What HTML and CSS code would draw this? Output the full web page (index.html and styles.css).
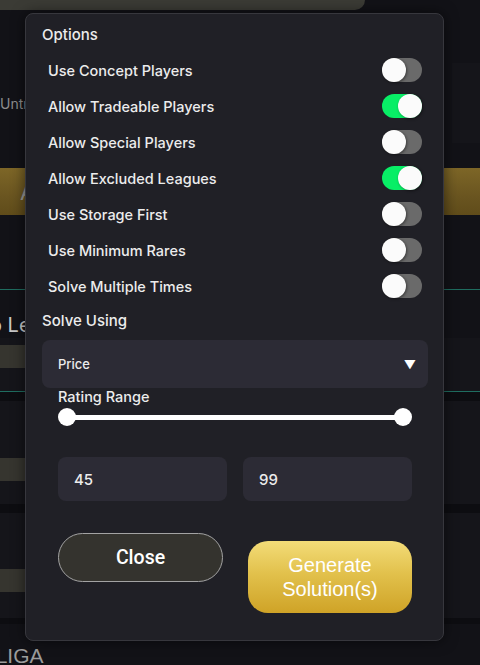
FILE: index.html
```html
<!DOCTYPE html>
<html lang="en">
<head>
<meta charset="utf-8">
<title>Options</title>
<link rel="stylesheet" href="styles.css">
</head>
<body>
<div class="page">
  <div class="topbar"></div>
  <div class="promo-row">
    <span class="muted-text">Untradeable only</span>
    <div class="side-card"></div>
  </div>
  <div class="gold-bar"><span>Add Players</span></div>
  <div class="teal-line"></div>
  <div class="section-title">Pro League</div>
  <div class="card card-first"><div class="stat-bar"></div></div>
  <div class="gap-band"></div>
  <div class="card card-mid"><div class="stat-bar"></div></div>
  <div class="gap-band"></div>
  <div class="card card-last"><div class="stat-bar"></div></div>
  <div class="gap-band gap-thin"></div>
  <div class="league-title">LALIGA</div>

  <div class="modal">
    <div class="heading">Options</div>
    <div class="options">
      <div class="opt-row"><span>Use Concept Players</span><span class="toggle"><span class="knob"></span></span></div>
      <div class="opt-row"><span>Allow Tradeable Players</span><span class="toggle on"><span class="knob"></span></span></div>
      <div class="opt-row"><span>Allow Special Players</span><span class="toggle"><span class="knob"></span></span></div>
      <div class="opt-row"><span>Allow Excluded Leagues</span><span class="toggle on"><span class="knob"></span></span></div>
      <div class="opt-row"><span>Use Storage First</span><span class="toggle"><span class="knob"></span></span></div>
      <div class="opt-row"><span>Use Minimum Rares</span><span class="toggle"><span class="knob"></span></span></div>
      <div class="opt-row"><span>Solve Multiple Times</span><span class="toggle"><span class="knob"></span></span></div>
    </div>
    <div class="heading heading-solve">Solve Using</div>
    <div class="select"><span>Price</span><span class="arrow">▼</span></div>
    <div class="range-section">
      <div class="range-label">Rating Range</div>
      <div class="slider">
        <div class="slider-track"></div>
        <span class="thumb thumb-min"></span>
        <span class="thumb thumb-max"></span>
      </div>
      <div class="inputs">
        <div class="num-input">45</div>
        <div class="num-input">99</div>
      </div>
      <div class="actions">
        <button class="btn-close">Close</button>
        <button class="btn-generate">Generate<br>Solution(s)</button>
      </div>
    </div>
  </div>
</div>
</body>
</html>
```
FILE: styles.css
```css
* { box-sizing: border-box; }
html, body { margin: 0; padding: 0; }
body {
  background: #121217;
  font-family: Inter, "Noto Sans", sans-serif;
}
.page {
  position: relative;
  width: 480px;
  height: 665px;
  overflow: hidden;
  background: #121217;
}
.topbar {
  width: 365px;
  height: 10px;
  background: #3b3b35;
  border-bottom-right-radius: 12px;
}
.promo-row {
  margin-top: 53px;
  height: 80px;
  display: flex;
  align-items: center;
  justify-content: space-between;
}
.muted-text {
  color: #8d8d8d;
  font-size: 14px;
  white-space: nowrap;
}
.side-card {
  width: 28px;
  height: 80px;
  background: #15151a;
}
.gold-bar {
  margin-top: 25px;
  height: 47px;
  background: linear-gradient(180deg, #7d6627 0%, #6a5520 60%, #604c1a 100%);
  display: flex;
  align-items: center;
  padding-left: 20px;
  color: #9a9a9a;
  font-size: 22px;
}
.teal-line {
  margin-top: 74px;
  height: 1px;
  background: #1f6d60;
}
.section-title {
  height: 48px;
  display: flex;
  align-items: center;
  padding-top: 22px;
  color: #c9c9c9;
  font-size: 20px;
  text-indent: -30px;
  white-space: nowrap;
}
.card {
  background: #15151a;
}
.card-first {
  height: 54px;
  padding-top: 7px;
  border-bottom: 1px solid #1f6d60;
}
.card-mid {
  height: 103px;
  padding-top: 57px;
}
.card-last {
  height: 105px;
  padding-top: 56px;
}
.stat-bar {
  width: 140px;
  height: 23px;
  background: #36352f;
}
.gap-band {
  height: 9px;
  background: #0d0d11;
}
.gap-thin { height: 6px; }
.league-title {
  padding-top: 20px;
  color: #9c9c9c;
  font-family: "Liberation Sans", Arial, sans-serif;
  font-size: 21px;
  text-indent: -30px;
  white-space: nowrap;
}

/* modal */
.modal {
  position: absolute;
  left: 25px;
  top: 13px;
  width: 419px;
  height: 628px;
  background: #202026;
  border: 1px solid #37373d;
  border-radius: 8px;
  box-shadow: 0 0 14px rgba(0, 0, 0, 0.55);
  padding: 12px 15px 16px 16px;
  color: #ececec;
}
.heading {
  font-size: 15px;
  font-weight: 500;
  line-height: 18px;
}
.options {
  margin-top: 8px;
}
.opt-row {
  height: 36px;
  display: flex;
  align-items: center;
  justify-content: space-between;
  padding: 0 6px;
  font-size: 14.5px;
  font-weight: 500;
}
.toggle {
  width: 40px;
  height: 24px;
  border-radius: 12px;
  background: #6a6a6a;
  display: flex;
  justify-content: flex-start;
}
.toggle.on {
  background: #08ee66;
  justify-content: flex-end;
}
.knob {
  width: 24px;
  height: 24px;
  border-radius: 50%;
  background: #fbfbfb;
  box-shadow: 1px 1px 3px rgba(0, 0, 0, 0.45);
}
.heading-solve {
  margin-top: 8px;
}
.select {
  margin-top: 10px;
  height: 48px;
  border-radius: 8px;
  background: #2c2b35;
  display: flex;
  align-items: center;
  justify-content: space-between;
  padding: 0 12px 0 16px;
  font-size: 13px;
  font-weight: 500;
}
.arrow {
  font-size: 12px;
  color: #ffffff;
}
.range-section {
  padding: 0 16px;
}
.range-label {
  font-size: 14.5px;
  font-weight: 500;
  line-height: 18px;
}
.slider {
  position: relative;
  margin-top: 2px;
  height: 18px;
  display: flex;
  align-items: center;
  padding: 0 9px;
}
.slider-track {
  flex: 1;
  height: 5px;
  background: #ffffff;
}
.thumb {
  position: absolute;
  top: 0;
  width: 18px;
  height: 18px;
  border-radius: 50%;
  background: #ffffff;
}
.thumb-min { left: 0; }
.thumb-max { right: 0; }
.inputs {
  margin-top: 31px;
  display: flex;
  gap: 16px;
}
.num-input {
  flex: 1;
  height: 44px;
  border-radius: 8px;
  background: #2c2b35;
  display: flex;
  align-items: center;
  padding-left: 16px;
  font-size: 15px;
  font-weight: 500;
}
.actions {
  margin-top: 32px;
  display: flex;
  align-items: flex-start;
  gap: 25px;
}
.btn-close {
  width: 165px;
  height: 49px;
  border-radius: 25px;
  border: 1px solid #a3a3a3;
  background: #34332e;
  color: #ffffff;
  font-family: Roboto, "Liberation Sans", Arial, sans-serif;
  font-size: 19.5px;
  font-weight: 500;
}
.btn-generate {
  margin-top: 8px;
  width: 164px;
  height: 72px;
  border: none;
  border-radius: 20px;
  background: linear-gradient(180deg, #f3dc78 0%, #e2c14c 45%, #cfa327 100%);
  color: #ffffff;
  font-family: "Liberation Sans", Arial, sans-serif;
  font-size: 20px;
  line-height: 24px;
}
```
